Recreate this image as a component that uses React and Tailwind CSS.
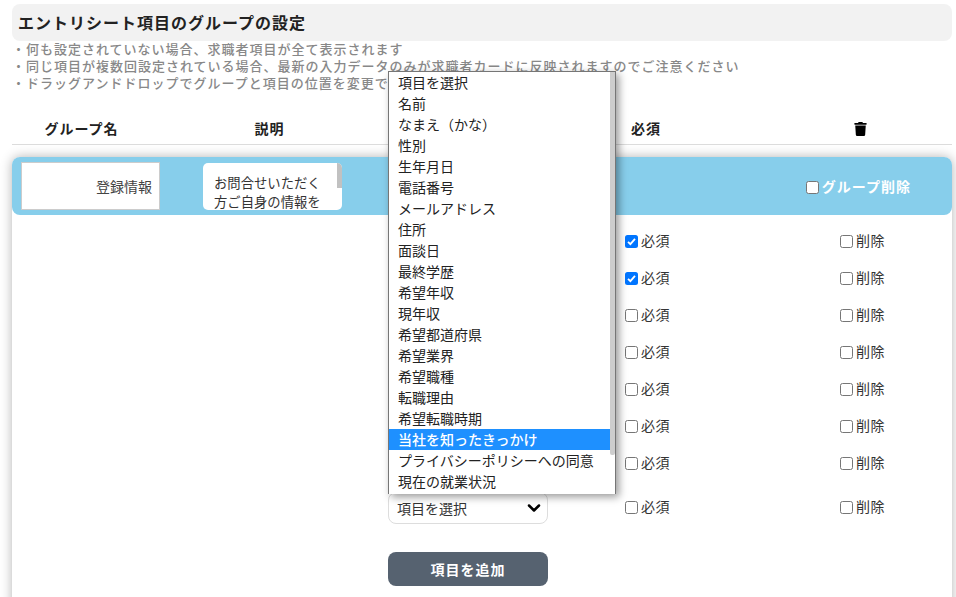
import React from 'react'
import { ChevronDown } from 'lucide-react'
import { FaTrash } from 'react-icons/fa'

const options = [
  '項目を選択', '名前', 'なまえ（かな）', '性別', '生年月日', '電話番号', 'メールアドレス', '住所', '面談日', '最終学歴',
  '希望年収', '現年収', '希望都道府県', '希望業界', '希望職種', '転職理由', '希望転職時期', '当社を知ったきっかけ',
  'プライバシーポリシーへの同意', '現在の就業状況',
]

const notes = [
  '・何も設定されていない場合、求職者項目が全て表示されます',
  '・同じ項目が複数回設定されている場合、最新の入力データのみが求職者カードに反映されますのでご注意ください',
  '・ドラッグアンドドロップでグループと項目の位置を変更できます',
]

const Check = ({ checked }) =>
  checked ? (
    <span className="mt-[2px] w-[13px] h-[13px] rounded-[2.5px] bg-[#0075ff] flex items-center justify-center shrink-0">
      <svg viewBox="0 0 12 12" className="w-[11px] h-[11px]">
        <path d="M2.2 6.3 L4.8 8.9 L9.8 3.2" fill="none" stroke="#fff" strokeWidth="2" />
      </svg>
    </span>
  ) : (
    <span className="mt-[2px] w-[13px] h-[13px] rounded-[2.5px] bg-white border border-[#767676] shrink-0" />
  )

const Row = ({ checked, last }) => (
  <div className={`grid grid-cols-[160px_77px_215px_1fr] items-center ${last ? 'h-[51px]' : 'h-[37px]'}`}>
    <div className="mt-[3px] h-[32px] rounded-lg border border-[#ddd] bg-white text-[14px] text-[#333] flex items-center justify-between pl-2 pr-[3px]">
      項目を選択
      <ChevronDown className="w-5 h-5 text-black" strokeWidth={3} />
    </div>
    <div className="col-start-3 flex items-center gap-[3px]">
      <Check checked={checked} />
      <span className="text-[14px] tracking-[0.5px] text-[#333]">必須</span>
    </div>
    <div className="flex items-center gap-[3px]">
      <Check />
      <span className="text-[14px] tracking-[0.5px] text-[#333]">削除</span>
    </div>
  </div>
)

export default function App() {
  return (
    <div className="relative w-[956px] h-[597px] overflow-hidden bg-white font-['Noto_Sans_CJK_JP','Noto_Sans',sans-serif] text-[#212529]">
      <div className="pl-3 pr-1 pt-1">
        <div className="h-[37px] rounded-lg bg-[#f2f2f2] flex items-center px-[6px] pb-[2px]">
          <h1 className="text-[16px] font-bold text-[#222] tracking-[1px]">エントリシート項目のグループの設定</h1>
        </div>
        <div className="-mt-[1px] text-[13px] leading-[17px] text-[#888] tracking-[1px] font-medium">
          {notes.map(n => <p key={n} className="whitespace-nowrap">{n}</p>)}
        </div>

        <div className="mt-[22px] h-[32px] border-b border-[#dcdcdc] grid grid-cols-[139px_237px_243px_137px_1fr] items-center text-[14px] font-bold tracking-[1px] text-[#222]">
          <div className="text-center">グループ名</div>
          <div className="text-center">説明</div>
          <div />
          <div>必須</div>
          <div className="flex justify-center">
            <FaTrash className="w-[13px] h-[14px] text-black" />
          </div>
        </div>

        <div className="mt-3 rounded-lg shadow-[0_0_12px_rgba(0,0,0,0.3)] bg-white h-[460px]">
          <div className="h-[58px] rounded-lg bg-[#87ceeb] flex items-center pl-[9px] pr-[41px]">
            <div className="w-[139px] h-[48px] bg-white border border-[#ccc] text-[14px] text-[#444] flex items-center justify-end pr-[7px]">
              登録情報
            </div>
            <div className="relative ml-[43px] w-[139px] h-[47px] bg-white rounded-[5px] overflow-hidden text-[13.33px] leading-[19px] text-[#333] pl-[11px] pr-[20px] pt-[10px]">
              お問合せいただく方ご自身の情報を
              <span className="absolute right-0 top-0 w-[5px] h-[25px] bg-[#c1c1c1]" />
            </div>
            <label className="ml-auto flex items-center gap-[3px] text-[14px] font-bold tracking-[1px] text-white">
              <Check />
              グループ削除
            </label>
          </div>

          <div className="pt-[7px] pl-[376px] pr-[8px]">
            {[true, true, false, false, false, false, false].map((c, i) => <Row key={i} checked={c} />)}
            <Row last />
          </div>

          <div className="ml-[376px] mt-[20px] w-[160px] h-[34px] rounded-lg bg-[#566270] text-white text-[14px] font-bold tracking-[1px] flex items-center justify-center">
            項目を追加
          </div>
        </div>
      </div>

      <div className="absolute left-[388px] top-[71px] w-[228px] h-[423px] bg-white border border-[#767676] border-b-0 shadow-[3px_3px_8px_rgba(0,0,0,0.4)] flex overflow-hidden">
        <ul className="w-[221px] text-[14px] leading-[21px] text-[#222]">
          {options.map(o => (
            <li key={o} className={`h-[21px] pl-[9px] whitespace-nowrap ${o === '当社を知ったきっかけ' ? 'bg-[#1e90ff] text-white font-medium' : ''}`}>{o}</li>
          ))}
        </ul>
        <div className="flex-1">
          <div className="w-[5px] h-[383px] rounded-b-[2px] bg-[#cdcdcd]" />
        </div>
      </div>
    </div>
  )
}
